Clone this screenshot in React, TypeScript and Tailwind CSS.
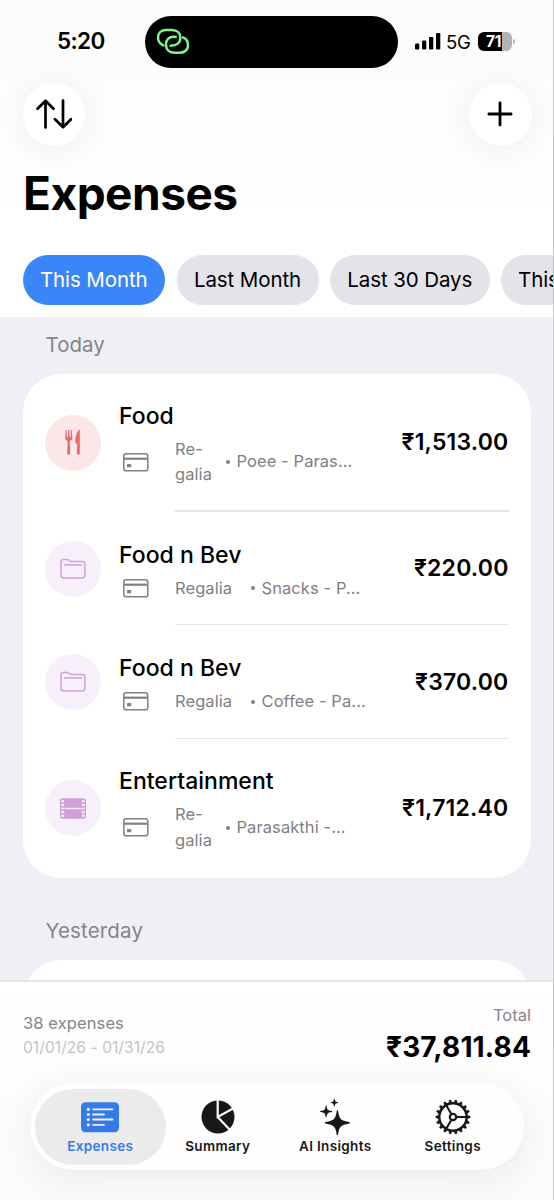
import type { ReactNode } from "react";

type Expense = {
  title: string;
  account: string[];
  note: string;
  amount: string;
  color: "red" | "purple";
  icon: ReactNode;
};

function FolderIcon() {
  return (
    <svg width="26" height="22" viewBox="0 0 26 22" fill="none" stroke="currentColor" strokeWidth="1.500">
      <path d="M1 4.200C1 2.300 1.900 1.400 3.700 1.400h3.200c1 0 1.500.2 2.200.8l.8.7c.5.4.9.6 1.700.6h10.500c1.900 0 2.800.9 2.800 2.700v11.100c0 1.800-.9 2.700-2.800 2.700H3.700C1.900 20 1 19.100 1 17.300z" />
      <path d="M4 6.900h18.200" />
    </svg>
  );
}

function ForkKnifeIcon() {
  return (
    <svg width="18" height="27" viewBox="0 0 18 27" fill="currentColor">
      <path d="M1.700 1.200 1.100 8.500c-.1 1.700.8 2.700 2 3.300.4.200.5.500.5.900L3.200 24c0 1 .5 1.700 1.500 1.700s1.500-.7 1.500-1.700l-.4-11.300c0-.4.2-.7.500-.9 1.300-.6 2.200-1.600 2.100-3.300l-.6-7.300c0-.7-1-.7-1 0l.1 6.400c0 .8-1.200.8-1.200 0l-.3-6.400c0-.7-1.200-.7-1.200 0l-.3 6.400c0 .8-1.200.8-1.200 0l.1-6.400c0-.7-1.100-.7-1.100 0z" />
      <path d="M15.800 1.400V24c0 1-.5 1.700-1.500 1.700s-1.500-.7-1.500-1.700l.3-8.100c0-.5-.1-.8-.5-1.100-1-.7-1.400-1.500-1.300-2.900.2-4.600 1.200-8.300 3.500-10.800.4-.5 1-.3 1 .3z" />
    </svg>
  );
}

function FilmIcon() {
  const holes = [2, 5.7, 9.4, 13.1, 16.8];
  return (
    <svg width="26" height="21" viewBox="0 0 26 21">
      <rect x="0" y="0.200" width="26" height="20.600" rx="2.500" fill="currentColor" />
      {holes.map((y) => (
        <g key={y} fill="#f7effa">
          <rect x="1.300" y={y} width="2.900" height="2.200" rx=".7" />
          <rect x="21.800" y={y} width="2.900" height="2.200" rx=".7" />
        </g>
      ))}
      <path d="M5.500 10.500h15" stroke="#f7effa" strokeWidth="1.700" strokeLinecap="round" />
    </svg>
  );
}

function CardIcon() {
  return (
    <svg width="26" height="19" viewBox="0 0 26 19" fill="none" stroke="#808083">
      <rect x=".8" y=".8" width="24" height="17" rx="2.400" strokeWidth="1.500" />
      <path d="M1 5.700h23.600" strokeWidth="2.200" />
      <rect x="4" y="11" width="4.200" height="3.300" rx=".6" fill="#808083" stroke="none" />
    </svg>
  );
}

function ListIcon() {
  const lines = [
    [7, 34],
    [12.2, 25.5],
    [17.2, 34],
    [22.5, 25.5],
  ];
  return (
    <svg width="38" height="31" viewBox="0 0 38 31">
      <rect x="0" y="0.300" width="38" height="30" rx="4.500" fill="#347bea" />
      {lines.map(([y, end]) => (
        <g key={y}>
          <circle cx="7.300" cy={y + 0.3} r="1.600" fill="#f2f2f2" />
          <path d={`M12 ${y + 0.3}H${end - 2.5}`} stroke="#f2f2f2" strokeWidth="1.800" strokeLinecap="round" />
        </g>
      ))}
    </svg>
  );
}

function PieIcon() {
  return (
    <svg width="34" height="34" viewBox="0 0 34 34">
      <circle cx="17" cy="17" r="16.500" fill="#17171a" />
      <path d="M16.700 0v17L32 8.500M16.700 17l12.300 13" fill="none" stroke="#fefefe" strokeWidth="2.200" />
    </svg>
  );
}

function SparklesIcon() {
  return (
    <svg width="30" height="38" viewBox="0 0 30 38" fill="#17171a">
      <path d="M17.400 12.200c.4 0 .6.300.7.700 1.200 8 2.200 9.400 11.200 11.100.4.100.6.300.6.700s-.2.600-.6.700c-9 1.700-10 3.100-11.200 11.200-.1.400-.3.700-.7.700s-.6-.3-.7-.7c-1.200-8.100-2.200-9.500-11.200-11.200-.4-.1-.7-.3-.7-.7s.3-.6.700-.7c9-1.700 10-3.100 11.200-11.100.1-.4.300-.7.700-.7z" />
      <path d="M6.200 7.500c.3 0 .4.200.4.400.8 4.100 1 4.300 5.200 5 .3.100.5.200.5.500s-.2.400-.5.500c-4.200.7-4.400.9-5.200 5 0 .2-.1.400-.4.400s-.4-.2-.5-.4c-.8-4.100-1-4.300-5.200-5-.3-.1-.5-.2-.5-.5s.2-.4.500-.5c4.200-.7 4.400-.9 5.200-5 .1-.2.200-.4.500-.4z" />
      <path d="M14.400 .7c.2 0 .3.100.3.300.5 2.600.7 2.800 3.300 3.300.2.100.3.200.3.400s-.1.300-.3.300c-2.600.5-2.800.7-3.300 3.300 0 .2-.1.300-.3.300s-.3-.1-.4-.3c-.5-2.600-.7-2.800-3.200-3.300-.2 0-.3-.1-.3-.3s.1-.3.300-.4c2.500-.5 2.700-.7 3.200-3.300.1-.2.200-.3.400-.3z" />
    </svg>
  );
}

function GearIcon() {
  const teeth = Array.from({ length: 18 }, (_, i) => i * 20);
  return (
    <svg width="36" height="36" viewBox="-18 -18 36 36" fill="none" stroke="#17171a">
      <circle r="13.700" strokeWidth="2.400" />
      {teeth.map((deg) => (
        <path key={deg} d="M14.500 -1.700 17.200 -.8V.8L14.500 1.700z" fill="#17171a" strokeWidth=".3" transform={`rotate(${deg})`} />
      ))}
      <circle r="3.200" strokeWidth="2.200" />
      {[0, 120, 240].map((deg) => (
        <path key={deg} d="M4 0H13" strokeWidth="2.100" transform={`rotate(${deg})`} />
      ))}
    </svg>
  );
}

const expenses: Expense[] = [
  { title: "Food", account: ["Re-", "galia"], note: "Poee - Paras...", amount: "₹1,513.00", color: "red", icon: <ForkKnifeIcon /> },
  { title: "Food n Bev", account: ["Regalia"], note: "Snacks - P...", amount: "₹220.00", color: "purple", icon: <FolderIcon /> },
  { title: "Food n Bev", account: ["Regalia"], note: "Coffee - Pa...", amount: "₹370.00", color: "purple", icon: <FolderIcon /> },
  { title: "Entertainment", account: ["Re-", "galia"], note: "Parasakthi -...", amount: "₹1,712.40", color: "purple", icon: <FilmIcon /> },
];

const tabs = [
  { label: "Expenses", icon: <ListIcon />, active: true },
  { label: "Summary", icon: <PieIcon />, active: false },
  { label: "AI Insights", icon: <SparklesIcon />, active: false },
  { label: "Settings", icon: <GearIcon />, active: false },
];

function StatusBar() {
  return (
    <div className="flex h-[83px] items-start pt-4">
      <div className="w-[145px] shrink-0 pt-[9px] pl-[57px] text-[22.500px] leading-8 font-semibold tracking-[-0.6px]">5:20</div>
      <div className="h-[52px] w-[253px] shrink-0 rounded-full bg-black pt-3 pl-3">
        <svg width="32" height="26" viewBox="471 84 96 78" fill="none" stroke="#7df588" strokeWidth="7.500" strokeLinecap="round">
          <path d="M490 136C480 132 474 122 474 112C474 98 485 90 498 90H516C532 90 541 100 541 113C541 128 530 137 512 137" />
          <path d="M527 111C506 108 498 120 498 134C498 150 510 158 525 158H540C555 158 564 148 564 136C564 124 557 115 549 112" />
        </svg>
      </div>
      <div className="ml-4 flex h-[51px] items-center">
        <svg width="27" height="17" viewBox="0 0 27 17">
          <rect x="1" y="10.500" width="4.300" height="6" rx="1.200" />
          <rect x="8" y="7.500" width="4.300" height="9" rx="1.200" />
          <rect x="15" y="4" width="4.300" height="12.500" rx="1.200" />
          <rect x="22" y="0" width="4.300" height="16.500" rx="1.200" />
        </svg>
        <span className="ml-[5px] w-[32px] text-[18.500px] leading-6 tracking-[-0.2px]">5G</span>
        <div className="flex h-[19px] w-[34px] items-center overflow-hidden rounded-[6px] bg-[linear-gradient(to_right,#000_70%,#b3b3b3_70%)] pl-[8px] text-[15.500px] font-bold tracking-[-0.3px] text-white">
          71
        </div>
        <div className="ml-[1px] h-[5px] w-[2px] rounded-r-full bg-[#b3b3b3]" />
      </div>
    </div>
  );
}

function ExpenseRow({ expense, last }: { expense: Expense; last: boolean }) {
  const { title, account, note, amount, color, icon } = expense;
  const twoLines = account.length > 1;

  return (
    <div className={`relative flex items-center pr-[22.500px] pl-[22px] ${twoLines ? "h-[138.300px]" : "h-[113.700px]"}`}>
      <div
        className={`flex size-14 shrink-0 items-center justify-center rounded-full ${
          color === "red" ? "bg-[#fbe7e7] text-[#e96b6b]" : "bg-[#f7effa] text-[#d0a0d9]"
        }`}
      >
        {icon}
      </div>
      <div className={`ml-[18px] ${twoLines ? "mt-[4px]" : "mt-[4px]"}`}>
        <h3 className="text-[23px] leading-7 font-medium tracking-[0.020px]">{title}</h3>
        <div className={`mt-[7px] flex items-center text-[16.500px] tracking-[0.080px] text-[#808083] ${twoLines ? "leading-[25.500px]" : "leading-[25px]"}`}>
          <div className="ml-1 w-[52px] shrink-0">
            <CardIcon />
          </div>
          <div className={`shrink-0 ${twoLines ? "w-[51px]" : "w-[76px]"}`}>
            {account.map((part) => (
              <div key={part}>{part}</div>
            ))}
          </div>
          <span className="mr-[7px] size-[3.500px] shrink-0 rounded-full bg-[#808083]" />
          <span className="whitespace-nowrap">{note}</span>
        </div>
      </div>
      <div className="ml-auto text-[23px] font-semibold tracking-[0.200px]">{amount}</div>
      {!last && <div className="absolute right-[22px] bottom-0 left-[152px] h-[1.500px] bg-[#e6e6e8]" />}
    </div>
  );
}

function TabBar() {
  return (
    <nav className="ml-[30px] flex h-[87px] w-[494px] rounded-full bg-[#fefefe] pt-[6px] pl-[5px] shadow-[0_6px_34px_rgba(0,0,0,0.07)]">
      {tabs.map(({ label, icon, active }) => (
        <div
          key={label}
          className={`-mr-[13px] flex h-[76px] w-[130.500px] shrink-0 flex-col items-center rounded-full ${
            active ? "bg-[#ebebeb] text-[#347bea]" : "text-[#17171a]"
          }`}
        >
          <div className="mt-[9px] flex h-[38px] items-center">{icon}</div>
          <span className="text-[13.500px] leading-5 font-semibold tracking-[0.350px]">{label}</span>
        </div>
      ))}
    </nav>
  );
}

export default function App() {
  return (
    <div className="flex h-[1200px] w-[554px] flex-col overflow-hidden border-r border-[#c4c4c6] bg-[#f0eff5] font-['Inter','Liberation_Sans',sans-serif] text-black">
      <header className="h-[317px] shrink-0 overflow-hidden bg-linear-to-b from-[#fbfbfb] to-white to-70%">
        <StatusBar />
        <div className="flex justify-between pr-[21.500px] pl-[22.500px]">
          <button className="flex size-[62.500px] items-center justify-center rounded-full bg-white shadow-[0_4px_34px_rgba(0,0,0,0.07)]">
            <svg width="36" height="30" viewBox="0 0 36 30" fill="none" stroke="black" strokeWidth="2.700" strokeLinecap="round" strokeLinejoin="round">
              <path d="M9.500 28.500V1.800M1.500 9.700l8-8 8 8" />
              <path d="M27 1.500v26.700M19 20.200l8 8 8-8" />
            </svg>
          </button>
          <button className="flex size-[62.500px] items-center justify-center rounded-full bg-white shadow-[0_4px_34px_rgba(0,0,0,0.07)]">
            <svg width="26" height="26" viewBox="0 0 26 26" stroke="black" strokeWidth="2.800" strokeLinecap="round">
              <path d="M13 1.900v22.200M1.900 13h22.200" />
            </svg>
          </button>
        </div>
        <h1 className="mt-[18px] pl-[23px] text-[46px] leading-[59px] font-bold tracking-[-0.5px]">Expenses</h1>
        <div className="mt-[32px] flex gap-[11.500px] pl-[22.500px] text-[20.500px] leading-[50.500px] tracking-[-0.100px] whitespace-nowrap">
          <div className="w-[142.500px] shrink-0 rounded-full bg-[#3a86f8] text-center text-white">This Month</div>
          <div className="w-[142px] shrink-0 rounded-full bg-[#e4e3e9] text-center">Last Month</div>
          <div className="w-[159.500px] shrink-0 rounded-full bg-[#e4e3e9] text-center">Last 30 Days</div>
          <div className="w-[130px] shrink-0 rounded-full bg-[#e4e3e9] pl-[17px]">This Year</div>
        </div>
      </header>

      <main className="h-[663px] shrink-0 overflow-hidden pr-[22px] pl-[23px]">
        <h2 className="h-[56.500px] pt-[14px] pl-[22.500px] text-[20.500px] leading-7 text-[#85858a]">Today</h2>
        <section className="h-[504.500px] rounded-[38px] bg-white">
          {expenses.map((expense, i) => (
            <ExpenseRow key={i} expense={expense} last={i === expenses.length - 1} />
          ))}
        </section>
        <h2 className="h-[82px] pt-[39px] pl-[22.500px] text-[20.500px] leading-7 tracking-[0.150px] text-[#85858a]">Yesterday</h2>
        <section className="h-[80px] rounded-t-[38px] bg-white" />
      </main>

      <footer className="h-[220px] shrink-0 border-t-2 border-[#e6e6e9] bg-linear-to-b from-white to-[#fafafa]">
        <div className="flex h-[101px] justify-between pr-[22px] pl-[23px] text-[16.500px] text-[#85858a]">
          <div className="pt-[28px]">
            <p className="leading-[26px] tracking-[0.100px]">38 expenses</p>
            <p className="text-[15.500px] leading-6 tracking-[0.080px] text-[#c3c3c6]">01/01/26 - 01/31/26</p>
          </div>
          <div className="pt-[20px] text-right">
            <p className="leading-[26px]">Total</p>
            <p className="text-[28px] leading-[38px] font-bold tracking-[0.150px] text-black">₹37,811.84</p>
          </div>
        </div>
        <TabBar />
      </footer>
    </div>
  );
}
